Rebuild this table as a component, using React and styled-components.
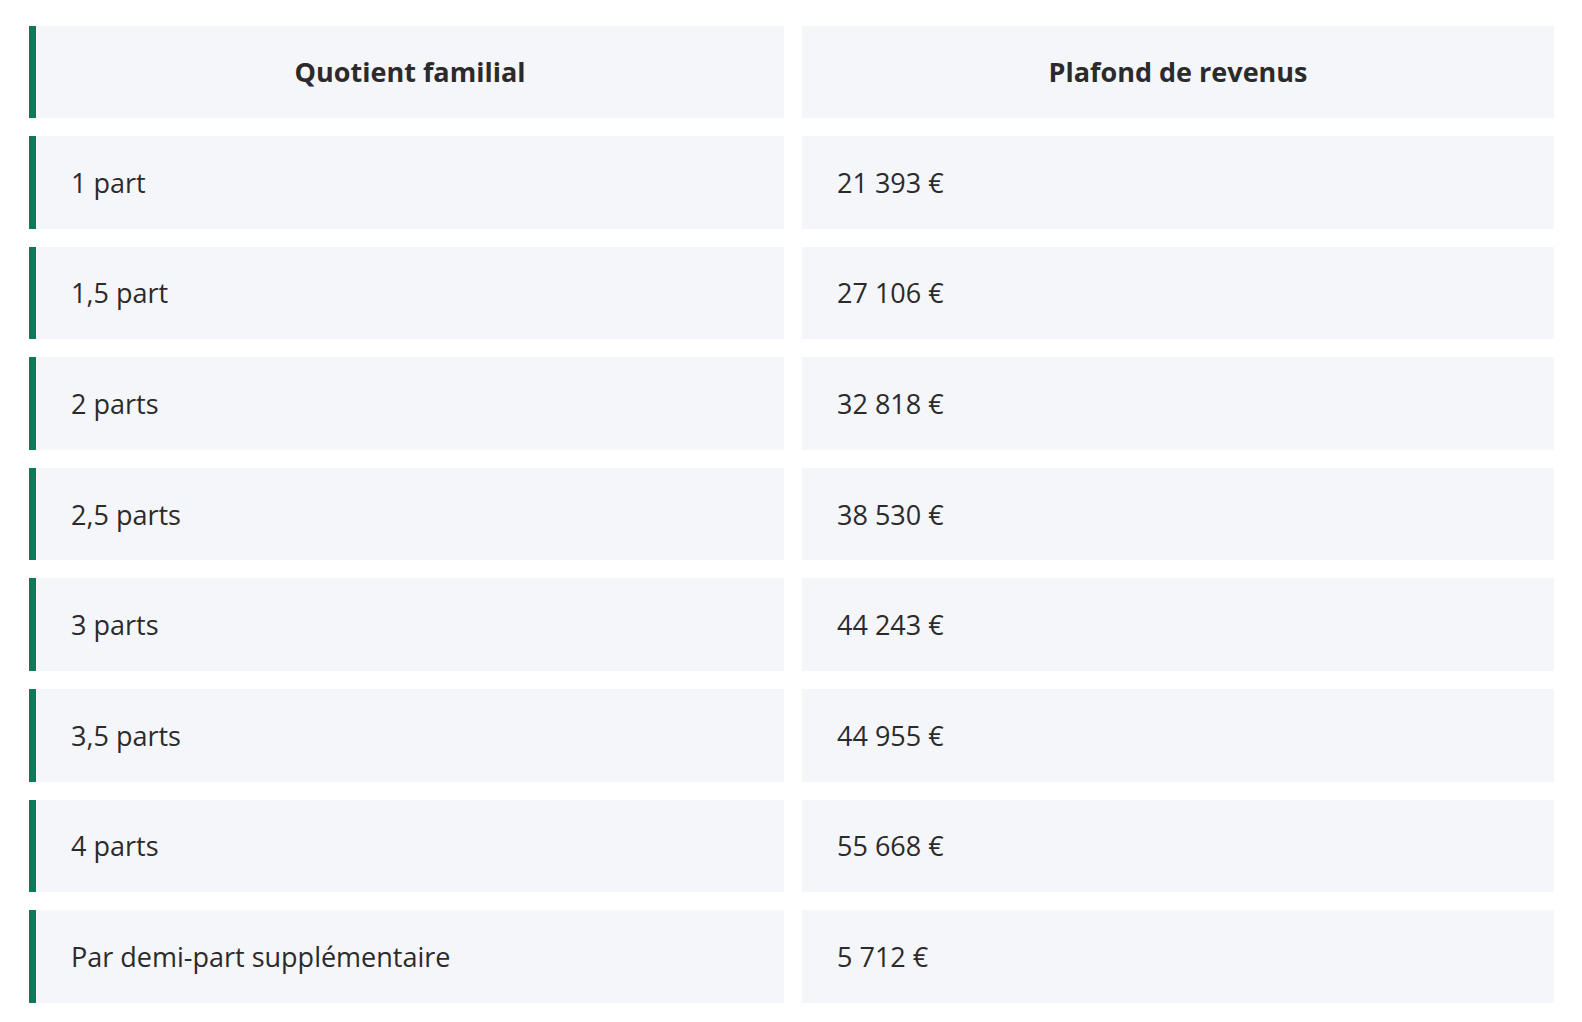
import React from "react";
import styled, { createGlobalStyle } from "styled-components";

const Global = createGlobalStyle`
  html, body { margin: 0; padding: 0; background: #ffffff; }
  body { font-family: "Open Sans", "Noto Sans", sans-serif; color: #2b2b2b; }
`;

const Wrapper = styled.div`
  padding: 7.5px 10px 0 11px;
`;

const Table = styled.table`
  width: 100%;
  table-layout: fixed;
  border-collapse: separate;
  border-spacing: 18px 18.5px;
`;

const Col = styled.col`
  width: ${(p) => p.$w};
`;

const HeadCell = styled.th`
  background: #f5f6fa;
  height: 92.6px;
  padding: 0 35px;
  font-size: 27px;
  font-weight: 700;
  text-align: center;
  color: #2b2b2b;
  box-sizing: border-box;
  border-left: ${(p) => (p.$accent ? "7px solid #0b7a56" : "none")};
`;

const Cell = styled.td`
  background: #f5f6fa;
  height: 92.6px;
  padding: 0 35px;
  font-size: 27px;
  font-weight: 400;
  text-align: left;
  color: #2b2b2b;
  box-sizing: border-box;
  border-left: ${(p) => (p.$accent ? "7px solid #0b7a56" : "none")};
`;

const rows = [
  ["1 part", "21 393 €"],
  ["1,5 part", "27 106 €"],
  ["2 parts", "32 818 €"],
  ["2,5 parts", "38 530 €"],
  ["3 parts", "44 243 €"],
  ["3,5 parts", "44 955 €"],
  ["4 parts", "55 668 €"],
  ["Par demi-part supplémentaire", "5 712 €"],
];

export default function App() {
  return (
    <>
      <Global />
      <Wrapper>
        <Table>
          <colgroup>
            <Col $w="755px" />
            <Col $w="752px" />
          </colgroup>
          <thead>
            <tr>
              <HeadCell $accent>Quotient familial</HeadCell>
              <HeadCell>Plafond de revenus</HeadCell>
            </tr>
          </thead>
          <tbody>
            {rows.map(([a, b]) => (
              <tr key={a}>
                <Cell $accent>{a}</Cell>
                <Cell>{b}</Cell>
              </tr>
            ))}
          </tbody>
        </Table>
      </Wrapper>
    </>
  );
}
